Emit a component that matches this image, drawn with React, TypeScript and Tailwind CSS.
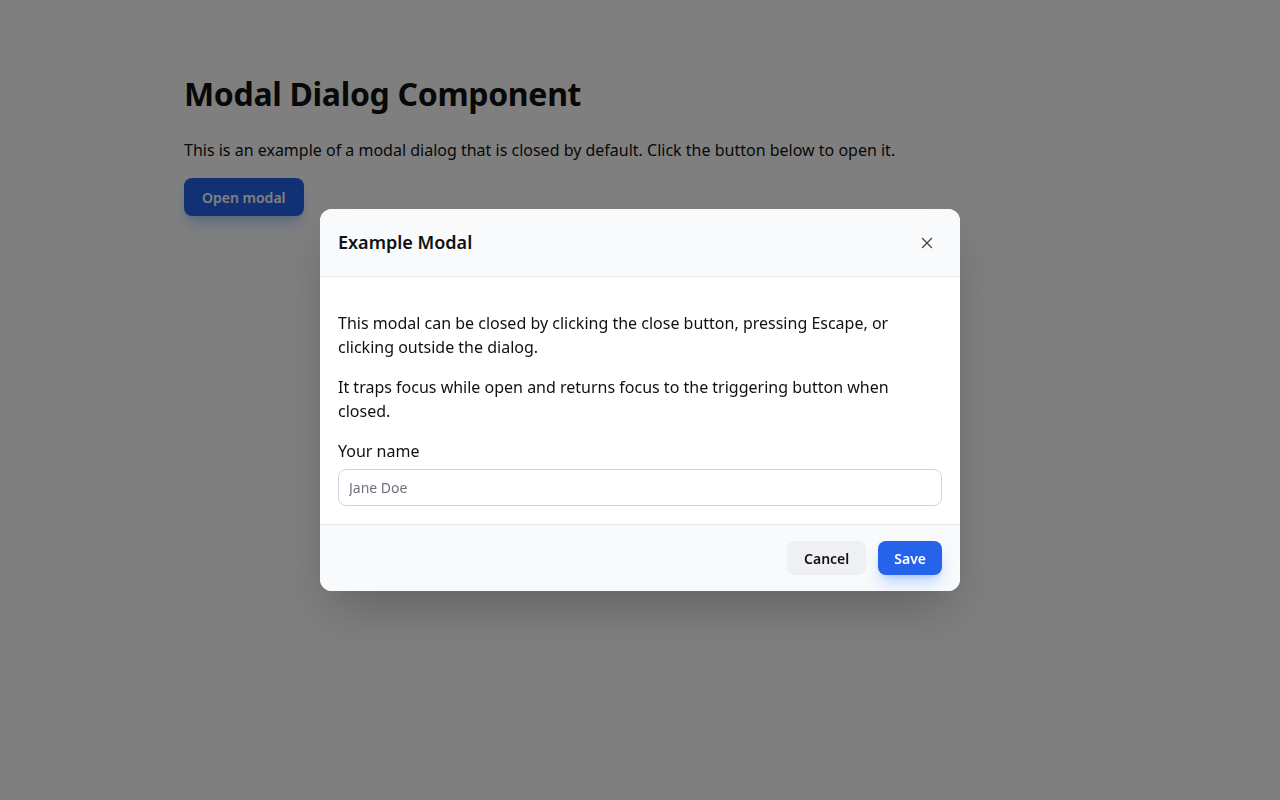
import { X } from 'lucide-react'

export default function App() {
  return (
    <div className="min-h-screen bg-white text-[#111] font-['Inter',sans-serif]">
      <main className="max-w-[912px] mx-auto pt-[74px]">
        <h1 className="text-[32px] font-bold leading-[40px] tracking-[-0.01em]">Modal Dialog Component</h1>
        <p className="mt-[24px] text-[16px] leading-[24px]">
          This is an example of a modal dialog that is closed by default. Click the button below to open it.
        </p>
        <button className="mt-[16px] h-[38px] px-[18px] rounded-lg bg-[#2563eb] text-white text-[14px] font-semibold shadow-lg shadow-blue-500/30">
          Open modal
        </button>
      </main>

      {/* overlay */}
      <div className="fixed inset-0 bg-[rgba(0,0,0,0.5)] flex items-center justify-center">
        <div className="w-[640px] bg-white rounded-xl shadow-2xl overflow-hidden">
          <div className="h-[68px] bg-[#f8fafc] border-b border-[#e5e7eb] flex items-center justify-between pl-[18px] pr-[24px]">
            <h2 className="text-[18px] font-semibold">Example Modal</h2>
            <X size={18} strokeWidth={1.75} className="text-[#444]" />
          </div>
          <div className="px-[18px] pt-[34px] pb-[18px] text-[16px] leading-[24px]">
            <p>This modal can be closed by clicking the close button, pressing Escape, or clicking outside the dialog.</p>
            <p className="mt-[16px]">It traps focus while open and returns focus to the triggering button when closed.</p>
            <label className="block mt-[16px]">Your name</label>
            <input
              placeholder="Jane Doe"
              className="mt-[6px] w-full h-[37px] px-[10px] rounded-lg border border-[#d1d5db] text-[14px] placeholder:text-[#6b7280] outline-none"
            />
          </div>
          <div className="h-[67px] bg-[#f8fafc] border-t border-[#e5e7eb] flex items-center justify-end gap-[12px] px-[18px]">
            <button className="h-[34px] px-[17px] rounded-lg bg-[#eef0f3] text-[14px] font-semibold">Cancel</button>
            <button className="h-[34px] px-[16px] rounded-lg bg-[#2563eb] text-white text-[14px] font-semibold shadow-lg shadow-blue-500/30">Save</button>
          </div>
        </div>
      </div>
    </div>
  )
}
